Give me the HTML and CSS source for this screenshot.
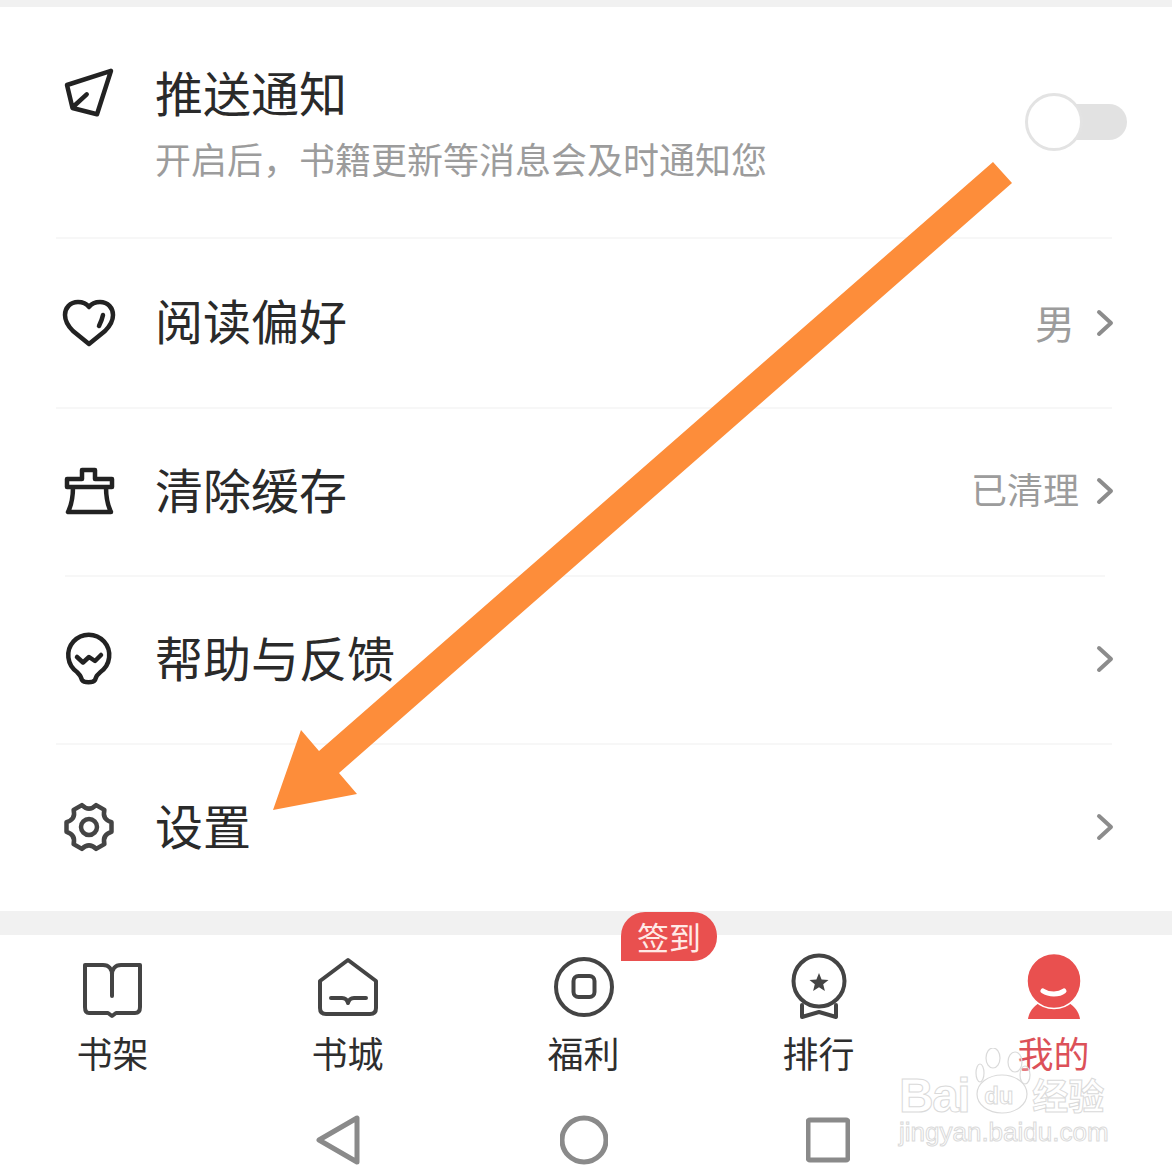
FILE: index.html
```html
<!DOCTYPE html>
<html lang="zh-CN">
	<head>
		<meta charset="UTF-8" />
		<meta name="viewport" content="width=device-width, initial-scale=1.0" />
		<title>我的</title>
		<link rel="stylesheet" href="styles.css">
	</head>
	<body>
		<div class="screen">
			<div class="band band_top"></div>

			<div class="row row_push">
				<div class="row_main">
					<svg class="icon icon_push" width="56" height="56" viewBox="0 0 56 56">
						<path d="M51 5.8 L7 20 L12.5 43 L37 49.3 Z M13.5 41.5 L26.7 29.3" />
					</svg>
					<div class="row_text">
						<div class="title">推送通知</div>
						<div class="subtitle">开启后，书籍更新等消息会及时通知您</div>
					</div>
				</div>
				<div class="toggle">
					<div class="toggle_track"></div>
					<div class="toggle_thumb"></div>
				</div>
			</div>
			<div class="divider"></div>

			<div class="row">
				<div class="row_main">
					<svg class="icon" width="56" height="56" viewBox="0 0 56 56">
						<path d="M29 12 C26 8 22 7 18 7 C10 7 5 13 5 20 C5 26 8 31 13 36 L29 49 L45 36 C50 31 53 26 53 20 C53 13 48 7 40 7 C36 7 32 8 29 12 Z M43 20 C42 25 40.5 28 39 31" />
					</svg>
					<div class="title">阅读偏好</div>
				</div>
				<div class="value value_big">男</div>
				<svg class="chevron" width="18" height="28" viewBox="0 0 18 28">
					<path d="M3 3 L15 14 L3 25" />
				</svg>
			</div>
			<div class="divider"></div>

			<div class="row row_short">
				<div class="row_main">
					<svg class="icon" width="56" height="56" viewBox="0 0 56 56">
						<path d="M7 15 H22 V6 H35 V15 H52 V23 H7 Z M13 23 C13 33 11 42 8 48 H51 C48 42 46 33 46 23" />
					</svg>
					<div class="title">清除缓存</div>
				</div>
				<div class="value">已清理</div>
				<svg class="chevron" width="18" height="28" viewBox="0 0 18 28">
					<path d="M3 3 L15 14 L3 25" />
				</svg>
			</div>
			<div class="divider divider_short"></div>

			<div class="row row_short">
				<div class="row_main">
					<svg class="icon" width="56" height="56" viewBox="0 0 56 56">
						<path d="M17 40 A20.5 20.5 0 1 1 40.5 40 L37 43.5 C36 45 36 46 35 48 C33 51 24 51 22 48 C21 46 21 45 20 43.5 Z M17 25 L23 30.5 L29 25 L35 29 L41 23" />
					</svg>
					<div class="title">帮助与反馈</div>
				</div>
				<svg class="chevron" width="18" height="28" viewBox="0 0 18 28">
					<path d="M3 3 L15 14 L3 25" />
				</svg>
			</div>
			<div class="divider"></div>

			<div class="row row_short">
				<div class="row_main">
					<svg class="icon icon_gear" width="56" height="56" viewBox="0 0 56 56">
						<path d="M51.5 22.2 L51.5 31.8 Q42 34.5 44.4 44.1 L36.1 48.9 Q29 42 21.9 48.9 L13.6 44.1 Q16 34.5 6.5 31.8 L6.5 22.2 Q16 19.5 13.6 9.9 L21.9 5.1 Q29 12 36.1 5.1 L44.4 9.9 Q42 19.5 51.5 22.2 Z" />
						<circle cx="29" cy="27" r="8" />
					</svg>
					<div class="title">设置</div>
				</div>
				<svg class="chevron" width="18" height="28" viewBox="0 0 18 28">
					<path d="M3 3 L15 14 L3 25" />
				</svg>
			</div>

			<div class="band band_bottom"></div>

			<div class="nav">
				<div class="tabs">
					<div class="tab tab_left">
						<svg class="tab_icon" width="64" height="64" viewBox="0 0 64 64">
							<path d="M3 7 H21 C27 7 30 11 30 17 C30 11 33 7 39 7 H58 V49 C58 53 56 55 53 55 H34 L30 58 L26 55 H7 C4 55 3 53 3 49 Z M30 17 V38" />
						</svg>
						<div class="tab_label">书架</div>
					</div>
					<div class="tab tab_left">
						<svg class="tab_icon" width="64" height="64" viewBox="0 0 64 64">
							<path d="M31 2 L59 23 V50 C59 54 57 56 53 56 H9 C5 56 3 54 3 50 V23 Z" />
							<path d="M14 40 H25 C28 40 30 41 31 45 C32 41 34 40 37 40 H49" />
						</svg>
						<div class="tab_label">书城</div>
					</div>
					<div class="tab">
						<div class="badge">签到</div>
						<svg class="tab_icon" width="64" height="64" viewBox="0 0 64 64">
							<circle cx="32" cy="29" r="28" />
							<rect x="21.5" y="18" width="21" height="21" rx="5" />
						</svg>
						<div class="tab_label">福利</div>
					</div>
					<div class="tab">
						<svg class="tab_icon" width="64" height="64" viewBox="0 0 64 64">
							<circle cx="32" cy="23" r="25.5" />
							<path d="M15 47 V59 L32 54 L49 59 V47" />
							<polygon class="star" points="32,15 34.6,21.4 41.5,21.9 36.2,26.2 37.9,32.9 32,29.3 26.1,32.9 27.8,26.2 22.5,21.9 29.4,21.4" />
						</svg>
						<div class="tab_label">排行</div>
					</div>
					<div class="tab tab_active">
						<svg class="tab_me" width="64" height="64" viewBox="0 0 64 64">
							<path class="me_fill" d="M6 61 C7 54 11 49 17 45 H47 C53 49 57 54 58 61 Z" />
							<ellipse class="me_head" cx="32" cy="23" rx="27" ry="27.5" />
							<path class="me_smile" d="M21 33 C27 37 37 37 42 33" />
						</svg>
						<div class="tab_label">我的</div>
					</div>
				</div>

				<div class="system_bar">
					<svg width="46" height="52" viewBox="0 0 46 52">
						<path d="M41 4 V48 L3 26 Z" />
					</svg>
					<svg width="48" height="52" viewBox="0 0 48 52">
						<circle cx="24" cy="26" r="22" />
					</svg>
					<svg width="44" height="52" viewBox="0 0 44 52">
						<rect x="2" y="6" width="40" height="40" rx="2" />
					</svg>
				</div>
			</div>

			<svg class="arrow" width="1172" height="1172" viewBox="0 0 1172 1172">
				<polygon points="993,162 1012,183 339,773 357,794 273,810 301,730 319,751" />
			</svg>

			<div class="watermark">
				<div class="wm_top">
					<span class="wm_bai">Bai</span>
					<div class="wm_paw">
						<svg width="56" height="66" viewBox="0 0 56 66">
							<ellipse cx="18" cy="10" rx="7" ry="10" />
							<ellipse cx="40" cy="14" rx="7" ry="10" />
							<ellipse cx="5" cy="25" rx="4" ry="9" />
							<ellipse cx="50" cy="27" rx="5" ry="9" />
							<ellipse cx="27" cy="46" rx="25" ry="19" />
						</svg>
						<span class="wm_du">du</span>
					</div>
					<span class="wm_jy">经验</span>
				</div>
				<div class="wm_url">jingyan.baidu.com</div>
			</div>
		</div>
	</body>
</html>
```

FILE: styles.css
```css
body,
html {
	margin: 0;
	padding: 0;
}
.screen {
	position: relative;
	width: 1172px;
	height: 1172px;
	overflow: hidden;
	background: #ffffff;
	font-family: 'Noto Sans CJK SC', 'Noto Sans', sans-serif;
}
.band {
	background: #f1f1f1;
}
.band_top {
	height: 7px;
}
.band_bottom {
	height: 24px;
}

/* list rows */
.row {
	display: flex;
	align-items: center;
	height: 168px;
	padding: 0 58px 0 60px;
}
.row_short {
	height: 166px;
}
.row_short .chevron {
	margin-top: -2px;
}
.row_push {
	height: 230px;
	padding-right: 45px;
}
.row_main {
	display: flex;
	align-items: center;
	flex: 1;
	gap: 39px;
}
.row_push .row_main {
	align-items: flex-start;
	padding-bottom: 1px;
}
.icon_push {
	margin-top: 2px;
}
.icon {
	flex: none;
	fill: none;
	stroke: #222222;
	stroke-width: 4.5;
	stroke-linejoin: round;
	stroke-linecap: round;
}
.icon_gear {
	stroke: #444444;
}
.title {
	padding-bottom: 8px;
	font-size: 48px;
	line-height: 56px;
	color: #2a2a2a;
}
.subtitle {
	margin-top: 9px;
	font-size: 36px;
	line-height: 44px;
	color: #9c9c9c;
}
.value {
	margin-right: 17px;
	padding-bottom: 8px;
	font-size: 36px;
	line-height: 44px;
	color: #9c9c9c;
}
.value_big {
	margin-right: 21px;
	padding-bottom: 2px;
	font-size: 40px;
}
.chevron {
	flex: none;
	fill: none;
	stroke: #8c8c8c;
	stroke-width: 4;
	stroke-linecap: round;
	stroke-linejoin: round;
}
.divider {
	height: 2px;
	margin: 0 60px 0 56px;
	background: #f7f7f7;
}
.divider_short {
	margin: 0 67px 0 65px;
}

/* switch */
.toggle {
	position: relative;
	display: flex;
	align-items: center;
	width: 102px;
	height: 58px;
}
.toggle_track {
	width: 78px;
	height: 36px;
	margin-left: 24px;
	border-radius: 18px;
	background: #e2e2e2;
}
.toggle_thumb {
	position: absolute;
	left: 0;
	top: 0;
	width: 52px;
	height: 52px;
	border: 3px solid #e3e3e3;
	border-radius: 50%;
	background: #ffffff;
}

/* bottom navigation */
.tabs {
	display: grid;
	grid-template-columns: repeat(5, 235px);
	margin-left: -4px;
	padding-top: 23px;
}
.tab {
	position: relative;
	display: flex;
	flex-direction: column;
	align-items: center;
}
.tab_icon {
	overflow: visible;
	fill: none;
	stroke: #444444;
	stroke-width: 4;
	stroke-linejoin: round;
	stroke-linecap: round;
}
.tab_icon .star {
	fill: #444444;
	stroke: none;
}
.tab_me {
	overflow: visible;
}
.me_fill {
	fill: #e9504f;
}
.me_head {
	fill: #e9504f;
	stroke: #ffffff;
	stroke-width: 1.5;
}
.me_smile {
	fill: none;
	stroke: #ffffff;
	stroke-width: 5;
	stroke-linecap: round;
}
.tab_label {
	margin-top: 10px;
	font-size: 36px;
	line-height: 40px;
	color: #2e2e2e;
}
.tab_left .tab_label {
	margin-right: 2px;
}
.tab_active .tab_label {
	color: #dc5159;
}
.badge {
	position: absolute;
	left: 155px;
	top: -46px;
	width: 96px;
	height: 49px;
	border-radius: 24px 24px 24px 0;
	background: #e9504f;
	color: #ffeae6;
	font-size: 32px;
	line-height: 49px;
	text-align: center;
}
.system_bar {
	display: flex;
	gap: 198px;
	margin-top: 42px;
	padding-left: 316px;
}
.system_bar svg {
	fill: none;
	stroke: #8a8a8a;
	stroke-width: 5;
	stroke-linejoin: round;
}

/* pasted over the screenshot */
.arrow {
	position: absolute;
	left: 0;
	top: 0;
}
.arrow polygon {
	fill: #fd8d3a;
}
.watermark {
	position: absolute;
	left: 899px;
	top: 1048px;
	color: transparent;
	-webkit-text-stroke: 1px #dadada;
	font-family: 'Liberation Sans', 'Noto Sans CJK SC', sans-serif;
	font-weight: 700;
}
.wm_top {
	display: flex;
	align-items: flex-end;
	height: 66px;
}
.wm_bai {
	font-size: 48px;
	line-height: 36px;
	letter-spacing: -1.5px;
}
.wm_paw {
	position: relative;
	width: 56px;
	height: 66px;
	margin: 0 1px 0 6px;
}
.wm_paw svg {
	fill: #ffffff;
	fill-opacity: 0.25;
	stroke: #dadada;
	stroke-width: 1.2;
}
.wm_du {
	position: absolute;
	left: 9px;
	top: 34px;
	font-size: 24px;
	line-height: 28px;
}
.wm_jy {
	margin-bottom: 2px;
	font-size: 36px;
	line-height: 36px;
	font-family: 'Noto Sans CJK SC', sans-serif;
}
.wm_url {
	margin-top: 3px;
	font-size: 26px;
	line-height: 30px;
	font-weight: 400;
}
```
